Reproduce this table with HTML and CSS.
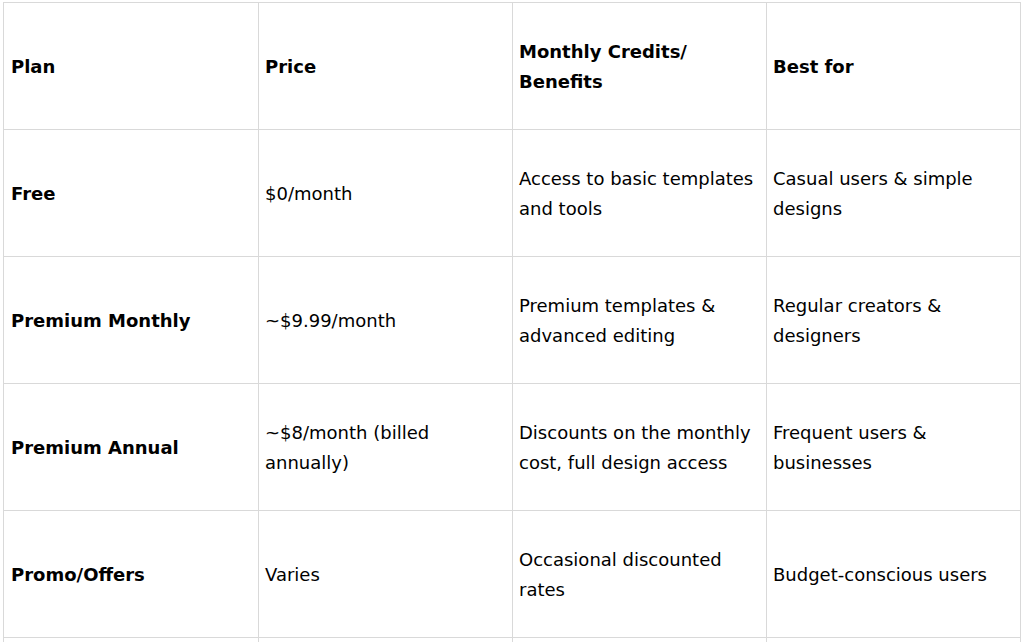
FILE: index.html
```html
<!DOCTYPE html>
<html lang="en">
<head>
<meta charset="utf-8">
<title>Plans</title>
<link rel="stylesheet" href="styles.css">
</head>
<body>
<div class="wrap">
<table class="plans">
  <colgroup>
    <col class="c1"><col class="c2"><col class="c3"><col class="c4">
  </colgroup>
  <thead>
    <tr>
      <th>Plan</th>
      <th>Price</th>
      <th>Monthly Credits/<wbr>Benefits</th>
      <th>Best for</th>
    </tr>
  </thead>
  <tbody>
    <tr>
      <td class="name">Free</td>
      <td>$0/month</td>
      <td>Access to basic templates and tools</td>
      <td>Casual users &amp; simple designs</td>
    </tr>
    <tr>
      <td class="name">Premium Monthly</td>
      <td>~$9.99/month</td>
      <td>Premium templates &amp; advanced editing</td>
      <td>Regular creators &amp; designers</td>
    </tr>
    <tr>
      <td class="name">Premium Annual</td>
      <td>~$8/month (billed annually)</td>
      <td>Discounts on the monthly cost, full design access</td>
      <td>Frequent users &amp; businesses</td>
    </tr>
    <tr>
      <td class="name">Promo/Offers</td>
      <td>Varies</td>
      <td>Occasional discounted rates</td>
      <td>Budget-conscious users</td>
    </tr>
    <tr>
      <td class="name"></td>
      <td></td>
      <td></td>
      <td></td>
    </tr>
  </tbody>
</table>
</div>
</body>
</html>
```

FILE: styles.css
```css
html, body {
  margin: 0;
  padding: 0;
  background: #ffffff;
}

body {
  overflow: hidden;
  height: 642px;
}

.wrap {
  padding: 2px 0 0 3px;
}

.plans {
  border-collapse: collapse;
  table-layout: fixed;
  width: 1017px;
  font-family: "DejaVu Sans", sans-serif;
  font-size: 18px;
  line-height: 30.5px;
  color: #000000;
}

.c1 { width: 255px; }
.c2 { width: 254px; }
.c3 { width: 254px; }
.c4 { width: 254px; }

.plans th,
.plans td {
  border: 1px solid #d9d9d9;
  height: 127px;
  padding: 2px 12px 0 6px;
  vertical-align: middle;
  text-align: left;
  box-sizing: border-box;
}

.plans th {
  font-weight: bold;
}

.plans th:first-child,
.plans td.name {
  padding-left: 7px;
  font-weight: bold;
}
```
